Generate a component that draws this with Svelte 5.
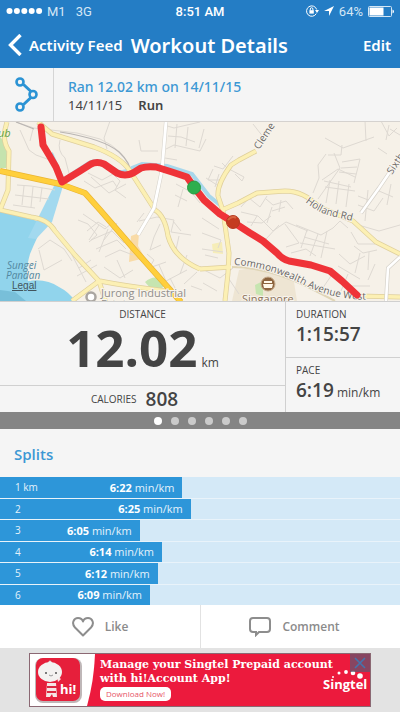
<script lang="ts">
    const splits = [
        { label: "1 km", pace: "6:22", width: 45.6 },
        { label: "2", pace: "6:25", width: 47.7 },
        { label: "3", pace: "6:05", width: 34.9 },
        { label: "4", pace: "6:14", width: 40.5 },
        { label: "5", pace: "6:12", width: 39.4 },
        { label: "6", pace: "6:09", width: 37.5 },
    ];

    let page = $state(0);
    let adVisible = $state(true);

    const route =
        "M41 127L43 145L49 155L56 167L62 182L80 171L91 164Q97 161 104 164L117 173Q125 177 133 173L141 168Q147 166 156 167L172 172L187 177L194 187L204 200L220 214L233 222L250 233L263 241L277 253Q282 259 289 261L311 265L330 271L342 281L357 295";

    const minorRoads = [
        "M16 122L34 128L77 133L100 139Q125 150 132 172",
        "M20 130L29 150L36 155L50 160M33 129L30 141M60 140Q57 151 65 158L70 177",
        "M84 181L95 188L113 181L117 187M91 177L109 193L126 184M88 173L102 180L113 174M112 173L120 181L115 190L126 198",
        "M17 185L31 186L55 190M24 186L22 205M15 195L49 199M33 187L31 207M42 188L40 202M13 205L35 208",
        "M164 125L174 128L200 122M168 136L181 137L195 142M166 149L174 145L200 151M177 124L175 148M188 127L186 146M165 158L177 160M176 184L191 192L200 203M175 195L187 201M183 189L178 207",
        "M110 121L104 138L107 149M139 140L141 151L158 151",
        "M200 151L206 139M204 129L199 148M253 124L264 138M214 166L223 169L233 156M222 163L230 171M219 174L215 187M229 169L244 177L242 181L235 174M206 178L217 185M213 169L208 180L220 180",
        "M325 138L343 148L374 137M342 145L341 155L328 155M365 121L366 141M334 153L340 168L318 199M326 154L318 165L319 178L313 193M322 180L338 169L355 177M342 162L360 159L354 183M341 168L357 167M339 172L356 174M324 181L351 187M325 187L355 191M330 180L326 203M339 181L336 204M349 184L346 207",
        "M381 121L389 136L397 128M390 129L400 135M389 125L386 140M378 148L387 154M358 205L374 211L383 198M368 190L365 221M358 196L371 201M355 224L379 231L400 225M379 191L393 197M391 184L387 205",
        "M78 220L88 224L97 235L89 242M83 214L105 229L113 222M87 231L98 222L106 227M91 240L112 231L124 243M96 249L117 240L126 249M99 225L89 240M108 229L99 252M117 223L104 240M105 257L120 250L133 255",
        "M38 249L50 240L64 249L72 261M39 250L44 270L62 260M72 255L86 282M77 276L97 265M79 268L91 260M104 267L120 278L133 270M117 260L125 278",
        "M139 221L157 217L174 220L171 232L191 235M160 224L154 237L150 250L161 245M173 221L181 231M179 236L175 254M147 254L154 260L149 268L166 262M159 265L166 281L187 270M187 255L180 274M170 278L176 290M184 284L197 272M144 213L137 222",
        "M241 212L258 216L273 231L286 222L308 231M247 222L262 223L271 216M257 216L251 226M267 223L272 207M279 225L266 239M285 224L299 243L286 247M296 225L321 235L333 228M307 230L301 248M318 234L310 256M327 231L321 258M300 243L335 249M304 237L329 244M291 253L306 249L316 256",
        "M241 207L249 198L260 207L267 196M266 199L273 205L286 201L293 209M272 211L285 207M281 200L279 212M202 218L219 229M202 233L221 240L218 248M202 249L223 252M205 255L218 258M333 228L340 221L348 228M351 232L358 244L375 244M354 246L363 253L377 250M339 254L350 264L365 256M360 253L355 273M369 252L368 270M338 266L360 279M375 264L368 280M348 274L341 291M331 276L320 292M350 286L370 286",
        "M204 270L220 278L233 268M203 283L217 291M227 276L239 294M191 286L202 290",
    ];
</script>

<main class="screen">
    <header class="top">
        <div class="status">
            <div class="carrier">
                <svg width="37" height="8" viewBox="0 0 37 8" fill="#fff">
                    {#each [0, 1, 2, 3, 4] as dot}
                        <circle cx={3.5 + dot * 7.4} cy="4" r="3" />
                    {/each}
                </svg>
                <span>M1</span>
                <span class="network">3G</span>
            </div>
            <strong>8:51 AM</strong>
            <div class="battery">
                <svg width="14" height="14" viewBox="0 0 14 14" fill="none" stroke="#fff">
                    <path d="M11.3 9.6A5.2 5.2 0 1 1 11.7 5.5" />
                    <path d="M10 6h4l-2 3z" fill="#fff" stroke="none" />
                    <rect x="4.4" y="6.2" width="4.4" height="3.4" fill="#fff" stroke="none" />
                    <path d="M5.3 6.5V5a1.3 1.3 0 0 1 2.6 0v1.5" />
                </svg>
                <svg width="10" height="10" viewBox="0 0 10 10" fill="#fff">
                    <path d="M10 0L0 5h5v5z" />
                </svg>
                <span>64%</span>
                <svg width="26" height="11" viewBox="0 0 26 11">
                    <rect x=".5" y=".5" width="23" height="10" rx="1" fill="none" stroke="#d5e7f5" />
                    <rect x="1.5" y="1.5" width="14" height="8" fill="#fff" />
                    <path d="M24.5 3.5q1.5.5 1.5 2t-1.5 2z" fill="#fff" />
                </svg>
            </div>
        </div>
        <nav class="nav">
            <button class="back">
                <svg width="14" height="22" viewBox="0 0 14 22" fill="none" stroke="#fff" stroke-width="3.4">
                    <path d="M12.5 1L2.5 11l10 10" />
                </svg>
                Activity Feed
            </button>
            <h1>Workout Details</h1>
            <button class="edit">Edit</button>
        </nav>
    </header>

    <section class="summary">
        <div class="summary-icon">
            <svg width="24" height="36" viewBox="0 0 24 36" fill="none" stroke="#2b93d4" stroke-width="2.6">
                <path d="M8.5 7.5L16 14.5M16 20.5L8.5 27.5" stroke-width="3" />
                <circle cx="5" cy="5" r="3.5" />
                <circle cx="18" cy="17.5" r="3.5" />
                <circle cx="5" cy="30" r="3.5" />
            </svg>
        </div>
        <div class="summary-text">
            <h2>Ran 12.02 km on 14/11/15</h2>
            <p><span>14/11/15</span><strong>Run</strong></p>
        </div>
    </section>

    <div class="map">
        <svg
            class="map-canvas"
            viewBox="0 122 400 179"
            preserveAspectRatio="xMidYMid slice"
            role="img"
            aria-label="Route map"
        >
            <rect y="122" width="400" height="179" fill="#f6f1e8" />
            <!-- parks and districts -->
            <path d="M0 137q7 5 7 18v13H0z" fill="#c5e3ae" />
            <path d="M145 282q10-9 21 0l-5 8-10-1z" fill="#c6e5b0" />
            <path d="M239 270l28-4 27 16 3 19h-65z" fill="#eee5d3" />
            <path d="M255 285l8-4v15l-7-2z" fill="#c6e5b0" />
            <path d="M212 244l10-2 1 12-10-1z" fill="#f6edb8" />
            <path d="M131 236l8-3-1 13 7 12-16 4z" fill="#f9dba7" />
            <!-- water -->
            <path d="M0 211l34 9 10 4Q37 237 30 254q-5 17-2 27 18-3 31 6 10 5 16 14H0z" fill="#91d4ec" />
            <path d="M54 186h9l-11 36-16 17-8-1z" fill="#a2d9ef" />
            <path d="M27 266l5 5-2 10" fill="none" stroke="#e6efee" stroke-width="2" />
            <path d="M0 290l15 2 11 9H0z" fill="#78bfd9" />
            <path d="M51 153l12 27 26-17q8-4 15 0l13 8q8 3 15-3l10-4 25 2 25 8 17 22 11 9" fill="none" stroke="#a8d7eb" stroke-width="4" />

            <g fill="none" stroke="#ded9d2" stroke-width="1">
                {#each minorRoads as road}
                    <path d={road} />
                {/each}
            </g>
            <path d="M16 122L34 129M60 132Q104 139 119 152 131 163 131 175" fill="none" stroke="#b9b5b2" stroke-width="1.2" />

            <!-- secondary roads, casing first -->
            <g fill="none" stroke-linejoin="round">
                {#each [{ color: "#dfcf9b", width: 5 }, { color: "#fcf0b4", width: 3.6 }] as line}
                    <g stroke={line.color} stroke-width={line.width}>
                        <path d="M38 122L52 134 94 147Q121 157 130 171L155 210Q165 216 168 236 174 258 200 269" />
                        <path d="M0 210L31 217Q48 219 55 231L75 255 99 281 106 303M99 281L72 301" />
                        <path d="M7 122Q1 140 9 151L8 190 0 210" />
                        <path d="M256 151L239 160 231 165Q217 184 218 196L223 211 229 253 228 273 225 301" />
                        <path d="M222 210L238 203 257 193 285 191Q304 191 319 207L353 221 376 242 400 254" />
                        <path d="M200 269L231 267M358 296L400 297M100 281Q125 286 167 291" />
                    </g>
                {/each}
                <path d="M166 122L162 170 154 208 138 235" stroke="#d6d2ca" stroke-width="4" />
                <path d="M166 122L162 170 154 208 138 235" stroke="#fff" stroke-width="3" />
                <path d="M400 157L379 188 361 213M400 257L388 268 386 301" stroke="#d6d2ca" stroke-width="4" />
                <path d="M400 157L379 188 361 213M400 257L388 268 386 301" stroke="#fff" stroke-width="2.6" />
                <path d="M232 267Q266 267 306 286L335 301" stroke="#e0d5b6" stroke-width="2" />
                <path d="M0 171L60 184 85 193 101 211 133 248 181 302" stroke="#eab533" stroke-width="6" />
                <path d="M0 171L60 184 85 193 101 211 133 248 181 302" stroke="#ffcf3c" stroke-width="4.6" />
            </g>

            <defs>
                <path id="road-cleme" d="M259 150L280 118" />
                <path id="road-holland" d="M305 202Q319 213 331 216L365 224" />
                <path id="road-sixth" d="M392 175L412 145" />
                <path id="road-commonwealth" d="M234 265Q264 266 300 283 337 303 380 299" />
            </defs>
            <g class="road-label">
                <text><textPath href="#road-cleme">Cleme</textPath></text>
                <text><textPath href="#road-holland">Holland Rd</textPath></text>
                <text><textPath href="#road-sixth">Sixth</textPath></text>
                <text><textPath href="#road-commonwealth">Commonwealth Avenue West</textPath></text>
            </g>
            <text class="park-label" x="-2" y="137">ub</text>
            <text class="water-label" x="7" y="269">Sungei</text>
            <text class="water-label" x="6" y="279">Pandan</text>
            <text class="place-label" x="101" y="297">Jurong Industrial</text>
            <text class="place-label" x="101" y="308">Estate</text>
            <text class="place-label school" x="242" y="303">Singapore</text>

            <circle cx="91" cy="297" r="4.5" fill="#fff" stroke="#aaa6a1" stroke-width="2.5" />
            <circle cx="268" cy="284" r="7" fill="#8d653f" stroke="#c6ab8d" />
            <path d="M264 281h8v2h-8zM263 284h10l-1 4h-8z" fill="#fff7e8" />

            <path d={route} fill="none" stroke="#ef3338" stroke-width="7" stroke-linecap="round" stroke-linejoin="round" />
            <circle cx="194" cy="187.5" r="6.5" fill="#2eae4d" stroke="#249c42" />
            <circle cx="233" cy="222" r="6.5" fill="#c43b20" stroke="#b33a20" />
            <path d="M228 220q4-5 8-2" fill="none" stroke="#d8633f" stroke-width="2" />
        </svg>
        <a class="legal" href="#legal">Legal</a>
    </div>

    <section class="stats">
        <div class="stats-main">
            <div class="distance">
                <span class="label">DISTANCE</span>
                <p><strong>12.02</strong><span>km</span></p>
            </div>
            <div class="calories">
                <span class="label">CALORIES</span>
                <strong>808</strong>
            </div>
        </div>
        <div class="stats-side">
            <div class="stat">
                <span class="label">DURATION</span>
                <p><strong>1:15:57</strong></p>
            </div>
            <div class="stat">
                <span class="label">PACE</span>
                <p><strong>6:19</strong> <span>min/km</span></p>
            </div>
        </div>
    </section>

    <div class="pager">
        {#each [0, 1, 2, 3, 4, 5] as i}
            <button
                class="pager-dot"
                class:pager-dot-current={i === page}
                aria-label="Page {i + 1}"
                onclick={() => (page = i)}
            ></button>
        {/each}
    </div>

    <section class="splits">
        <h2>Splits</h2>
        <div class="split-list">
            {#each splits as split}
                <div class="split">
                    <div class="split-bar" style="width: {split.width}%">
                        <span>{split.label}</span>
                        <span class="split-pace"><strong>{split.pace}</strong> min/km</span>
                    </div>
                </div>
            {/each}
        </div>
    </section>

    <div class="actions">
        <button class="action">
            <svg width="22" height="20" viewBox="0 0 22 20" fill="none" stroke="#8d8d8d" stroke-width="2">
                <path d="M11 18.5L3 10.5C-1 6 2 1 6 1c3 0 4.5 2 5 3.5C11.5 3 13 1 16 1c4 0 7 5 3 9.5z" stroke-linejoin="round" />
            </svg>
            Like
        </button>
        <button class="action comment">
            <svg width="22" height="20" viewBox="0 0 22 20" fill="none" stroke="#8d8d8d" stroke-width="2">
                <path d="M4 1h14q3 0 3 3v8q0 3-3 3h-8l-3 3v-3H4q-3 0-3-3V4q0-3 3-3z" />
            </svg>
            Comment
        </button>
    </div>

    <footer class="ad-area">
        {#if adVisible}
            <div class="ad">
                <svg width="66" height="52" viewBox="0 0 66 52" aria-hidden="true">
                    <path d="M0 0h65q-1 27-8 52H0z" fill="#fff" />
                    <rect x="5" y="4" width="47" height="45" rx="8" fill="#bfb7b8" />
                    <rect x="6" y="4" width="44" height="43" rx="7" fill="#e61f3b" />
                    <path d="M17 29h9l1 14h-4l-1-3-2 3h-4z" fill="#f5e5e5" />
                    <path d="M17 33h10M17 38h9" stroke="#db2940" stroke-width="2" />
                    <path d="M27 22l4 3-3 3z" fill="#f5e5e5" />
                    <path d="M18 9q2-4 4 0" fill="#fff" stroke="#ddd" />
                    <ellipse cx="20" cy="18" rx="12" ry="10" fill="#f4f2f1" />
                    <circle cx="16" cy="19" r="1" fill="#555" />
                    <circle cx="26" cy="19" r="1" fill="#555" />
                    <path d="M19 21q2 2 4 0" fill="none" stroke="#999" />
                    <text class="ad-hi" x="30" y="40">hi!</text>
                </svg>
                <div class="ad-copy">
                    <p>Manage your Singtel Prepaid account<br />with hi!Account App!</p>
                    <a href="#download">Download Now!</a>
                </div>
                <svg class="ad-logo" width="46" height="26" viewBox="0 0 46 26" fill="#fff" aria-label="Singtel">
                    <circle cx="11" cy="7" r="1" />
                    <circle cx="17" cy="3" r="1.5" />
                    <circle cx="24" cy="2" r="1.9" />
                    <circle cx="31" cy="3" r="2.3" />
                    <circle cx="38" cy="6" r="2.8" />
                    <text class="ad-brand" x="1" y="19">Singtel</text>
                </svg>
                <button class="ad-close" aria-label="Close ad" onclick={() => (adVisible = false)}>
                    <svg width="12" height="12" viewBox="0 0 12 12" stroke="#4474ae" stroke-width="1.6">
                        <path d="M1 1l10 10M11 1L1 11" />
                    </svg>
                </button>
            </div>
        {/if}
    </footer>
</main>

<style>
    :global(body) {
        background: #e3e3e3;
    }
    .screen {
        min-width: 320px;
        font-family: "Open Sans", "Noto Sans", sans-serif;
        color: #444;
        background: #f5f5f5;
    }
    .screen * {
        box-sizing: border-box;
    }
    svg {
        display: block;
        flex-shrink: 0;
    }
    button {
        margin: 0;
        padding: 0;
        border: none;
        background: none;
        font-family: inherit;
        cursor: pointer;
    }
    h1,
    h2,
    p {
        margin: 0;
    }

    .top {
        background: #247dc5;
        color: #fff;
    }
    .status {
        display: grid;
        grid-template-columns: 1fr auto 1fr;
        align-items: center;
        height: 22px;
        padding: 0 6px;
        font-family: Roboto, Inter, sans-serif;
        font-size: 13px;
    }
    .status strong {
        font-weight: 500;
    }
    .carrier,
    .battery {
        display: flex;
        align-items: center;
        gap: 4px;
        color: #d5e7f5;
    }
    .battery {
        justify-content: flex-end;
        gap: 5px;
    }
    .network {
        margin-left: 6px;
    }
    .nav {
        display: flex;
        align-items: center;
        justify-content: space-between;
        height: 46px;
        padding: 0 9px 0 8px;
        font-family: "Noto Sans", "Open Sans", sans-serif;
    }
    .back,
    .edit {
        display: flex;
        align-items: center;
        gap: 7px;
        color: #fff;
        font-size: 15px;
        font-weight: 600;
        white-space: nowrap;
    }
    .nav h1 {
        flex: 1;
        margin-left: 8px;
        font-size: 20px;
        font-weight: 600;
        white-space: nowrap;
    }

    .summary {
        display: flex;
        height: 54px;
        border-bottom: 1px solid #d5d2cf;
        font-family: "Noto Sans", "Open Sans", sans-serif;
    }
    .summary-icon {
        display: flex;
        align-items: center;
        justify-content: center;
        width: 54px;
        border-right: 1px solid #d5d5d5;
    }
    .summary-text {
        padding: 9px 14px;
    }
    .summary-text h2 {
        font-size: 14px;
        line-height: 19px;
        font-weight: 500;
        color: #3c98d4;
    }
    .summary-text p {
        display: flex;
        gap: 16px;
        font-size: 13px;
        line-height: 18px;
    }
    .summary-text strong {
        font-weight: 600;
    }

    .map {
        position: relative;
    }
    .map-canvas {
        width: 100%;
        height: 179px;
    }
    .road-label {
        font-size: 10px;
        fill: #696765;
        stroke: #f8f4ed;
        stroke-width: 2px;
        paint-order: stroke;
    }
    .park-label {
        font-size: 11px;
        font-style: italic;
        fill: #62a347;
    }
    .water-label {
        font-size: 10px;
        font-style: italic;
        fill: #53879f;
    }
    .place-label {
        font-size: 11px;
        fill: #918e8b;
        stroke: #f8f4ed;
        stroke-width: 2px;
        paint-order: stroke;
    }
    .school {
        fill: #8b7158;
    }
    .legal {
        position: absolute;
        left: 12px;
        bottom: 8px;
        font-family: "Liberation Sans", Arial, sans-serif;
        font-size: 10px;
        line-height: 14px;
        color: #41545d;
    }

    .stats {
        display: flex;
        height: 111px;
        border-top: 1px solid #d0d0d0;
    }
    .stats-main {
        display: flex;
        flex: 5;
        flex-direction: column;
        border-right: 1px solid #d0d0d0;
    }
    .stats-side {
        flex: 2;
        display: grid;
        grid-template-rows: 1fr 1fr;
    }
    .label {
        display: block;
        font-size: 10px;
        line-height: 14px;
    }
    .distance {
        flex: 1;
        padding-top: 5px;
        text-align: center;
    }
    .distance p {
        display: flex;
        align-items: baseline;
        justify-content: center;
        gap: 4px;
        font-size: 12px;
    }
    .distance strong {
        font-size: 51px;
        line-height: 52px;
        font-weight: 700;
    }
    .calories {
        display: flex;
        align-items: center;
        justify-content: center;
        gap: 9px;
        height: 27px;
        padding-right: 16px;
        border-top: 1px solid #d0d0d0;
    }
    .calories strong,
    .stat strong {
        font-size: 19px;
        line-height: 26px;
        font-weight: 600;
    }
    .stat {
        padding: 5px 10px 0;
        font-size: 12px;
        white-space: nowrap;
    }
    .stat + .stat {
        border-top: 1px solid #d0d0d0;
    }
    .stat p {
        line-height: 32px;
    }

    .pager {
        display: flex;
        align-items: center;
        justify-content: center;
        gap: 9px;
        height: 17px;
        background: #858585;
    }
    .pager-dot {
        width: 8px;
        height: 8px;
        border-radius: 50%;
        background: #cbcbcb;
    }
    .pager-dot-current {
        background: #fff;
    }

    .splits h2 {
        padding: 14px 14px 12px;
        font-size: 15px;
        line-height: 22px;
        font-weight: 600;
        color: #3c98d4;
    }
    .split-list {
        display: grid;
        grid-auto-rows: 1fr;
        gap: 1px;
        height: 128px;
        background: #e9f3fa;
    }
    .split {
        background: #d4e9f7;
    }
    .split-bar {
        display: flex;
        align-items: center;
        justify-content: space-between;
        height: 100%;
        padding: 0 8px 0 15px;
        background: #2d96d9;
        color: #e4f2fb;
        font-size: 10px;
        white-space: nowrap;
    }
    .split-pace {
        font-size: 11px;
    }
    .split-bar strong {
        color: #fff;
    }

    .actions {
        display: grid;
        grid-template-columns: 1fr 1fr;
        height: 43px;
        background: #fff;
    }
    .action {
        display: flex;
        align-items: center;
        justify-content: center;
        gap: 11px;
        color: #8b8b8b;
        font-size: 12px;
        font-weight: 600;
    }
    .comment {
        padding-right: 12px;
        border-left: 1px solid #e2e2e2;
    }

    .ad-area {
        display: flex;
        justify-content: center;
        height: 64px;
        padding: 5px 16px;
        background: #e3e3e3;
    }
    .ad {
        position: relative;
        display: flex;
        width: 342px;
        height: 54px;
        border: 1px solid #8b6873;
        background: #ec1a3d;
        color: #fff;
    }
    .ad-copy {
        flex: 1;
        padding: 4px 0 0 4px;
        white-space: nowrap;
    }
    .ad-copy p {
        font-family: "DejaVu Serif", serif;
        font-size: 11px;
        line-height: 14px;
        font-weight: 700;
    }
    .ad-copy a {
        display: block;
        width: fit-content;
        margin-top: 1px;
        padding: 0 6px;
        border-radius: 5px;
        background: #fff;
        font-size: 8px;
        line-height: 14px;
        color: #e75468;
        text-decoration: none;
    }
    .ad-hi {
        font-size: 13px;
        font-weight: 700;
        fill: #fff;
    }
    .ad-logo {
        position: absolute;
        right: 2px;
        bottom: 10px;
    }
    .ad-brand {
        font-size: 13px;
        font-weight: 700;
    }
    .ad-close {
        position: absolute;
        top: 0;
        right: 0;
        display: grid;
        place-items: center;
        width: 20px;
        height: 18px;
        background: rgba(92, 88, 112, 0.7);
    }
</style>
